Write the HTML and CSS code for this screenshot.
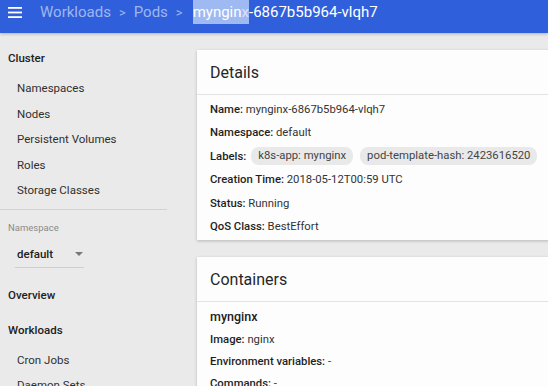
FILE: index.html
```html
<!DOCTYPE html>
<html lang="en">
<head>
    <meta charset="UTF-8">
    <meta name="viewport" content="width=device-width, initial-scale=1.0">
    <title>Pod - Kubernetes Dashboard</title>
    <link rel="stylesheet" href="styles.css">
</head>
<body>
    <!-- Top toolbar with breadcrumbs -->
    <header class="toolbar">
        <svg class="menu-icon" width="14" height="11" viewBox="0 0 14 11">
            <rect x="0" y="0" width="14" height="1.8" fill="#fff"/>
            <rect x="0" y="4.6" width="14" height="1.8" fill="#fff"/>
            <rect x="0" y="9.2" width="14" height="1.8" fill="#fff"/>
        </svg>
        <nav class="crumbs">
            <span class="crumb">Workloads</span>
            <span class="sep">&gt;</span>
            <span class="crumb">Pods</span>
            <span class="sep">&gt;</span>
            <span class="crumb current"><span class="selected">myngin</span><span class="selected caret">x</span>-6867b5b964-vlqh7</span>
        </nav>
    </header>

    <div class="layout">
        <!-- Side navigation -->
        <aside class="sidebar">
            <div class="nav-title cluster">Cluster</div>
            <a class="nav-item">Namespaces</a>
            <a class="nav-item">Nodes</a>
            <a class="nav-item">Persistent Volumes</a>
            <a class="nav-item">Roles</a>
            <a class="nav-item">Storage Classes</a>

            <hr class="nav-divider">

            <div class="ns-label">Namespace</div>
            <div class="ns-select">
                <span>default</span>
                <span class="arrow"></span>
            </div>

            <div class="nav-title overview">Overview</div>
            <div class="nav-title workloads">Workloads</div>
            <a class="nav-item">Cron Jobs</a>
            <a class="nav-item">Daemon Sets</a>
        </aside>

        <main class="content">
            <section class="card">
                <div class="card-header">Details</div>
                <div class="card-body details">
                    <div class="row"><b>Name:</b> mynginx-6867b5b964-vlqh7</div>
                    <div class="row"><b>Namespace:</b> default</div>
                    <div class="row labels">
                        <b>Labels:</b>
                        <span class="chip">k8s-app: mynginx</span>
                        <span class="chip">pod-template-hash: 2423616520</span>
                    </div>
                    <div class="row"><b>Creation Time:</b> 2018-05-12T00:59 UTC</div>
                    <div class="row"><b>Status:</b> Running</div>
                    <div class="row"><b>QoS Class:</b> BestEffort</div>
                </div>
            </section>

            <section class="card">
                <div class="card-header">Containers</div>
                <div class="card-body containers">
                    <div class="container-name">mynginx</div>
                    <div class="row"><b>Image:</b> nginx</div>
                    <div class="row"><b>Environment variables:</b> -</div>
                    <div class="row"><b>Commands:</b> -</div>
                </div>
            </section>
        </main>
    </div>
</body>
</html>
```

FILE: styles.css
```css
:root {
    --blue: #2f5fdb;
    --page-bg: #ebeaea;
    --text: #212121;
}

body {
    font-family: Roboto, "Liberation Sans", sans-serif;
    margin: 0;
    padding: 0;
    background-color: var(--page-bg);
    color: var(--text);
    overflow: hidden;
    height: 386px;
}

/* Toolbar */
.toolbar {
    background-color: var(--blue);
    height: 33px;
    display: flex;
    align-items: center;
    padding-left: 8px;
    box-shadow: 0 1px 3px rgba(0, 0, 0, 0.25);
    position: relative;
    z-index: 2;
}

.menu-icon {
    margin-right: 18px;
    margin-top: -9px;
}

.crumbs {
    display: flex;
    align-items: center;
    font-size: 15px;
    color: rgba(255, 255, 255, 0.55);
    margin-top: -9px;
    white-space: nowrap;
}

.sep {
    margin: 0 8px;
    font-size: 13px;
}

.sep + .crumb.current {
    margin-left: 2px;
}

.current {
    color: #ffffff;
}

.selected {
    background-color: #9fb9f2;
    padding: 3px 0;
}

.caret {
    color: #d8e2fa;
}

/* Layout */
.layout {
    display: flex;
}

.sidebar {
    width: 167px;
    flex-shrink: 0;
    padding-top: 15px;
    font-size: 11.5px;
}

.nav-title {
    font-weight: 500;
    padding-left: 8px;
    height: 20px;
    line-height: 20px;
}

.cluster {
    margin-bottom: 8px;
}

.nav-item {
    display: block;
    padding-left: 17px;
    height: 25.5px;
    line-height: 25.5px;
    color: #303030;
}

.nav-divider {
    border: none;
    border-top: 1px solid #d2d2d2;
    margin: 5px 0 0 0;
}

.ns-label {
    font-size: 9.5px;
    color: #8a8a8a;
    padding-left: 8px;
    margin-top: 12px;
}

.ns-select {
    margin: 14px 0 0 15px;
    width: 67px;
    display: flex;
    align-items: center;
    justify-content: space-between;
    font-weight: 500;
    padding: 0 0 6px 2px;
    border-bottom: 1px solid #cfcfcf;
}

.arrow {
    width: 0;
    height: 0;
    border-left: 4px solid transparent;
    border-right: 4px solid transparent;
    border-top: 4px solid #777;
    margin-right: 1px;
}

.overview {
    margin-top: 17px;
}

.workloads {
    margin-top: 15px;
    margin-bottom: 8px;
}

/* Main content */
.content {
    flex: 1;
    padding: 17px 0 0 30px;
    display: flex;
    flex-direction: column;
    gap: 17px;
}

.card {
    background-color: #fdfdfd;
    box-shadow: 0 1px 3px rgba(0, 0, 0, 0.22);
    margin-right: -20px;
}

.card-header {
    font-size: 16px;
    height: 44px;
    line-height: 46px;
    padding-left: 13px;
    border-bottom: 1px solid #e3e3e3;
    color: #262626;
}

.card-body {
    padding-left: 13px;
    font-size: 11.3px;
}

.details {
    padding-top: 2.5px;
    padding-bottom: 0.5px;
}

.details .row {
    height: 23.6px;
    line-height: 23.6px;
}

.containers {
    padding-top: 1px;
}

.containers .row {
    height: 22.3px;
    line-height: 22.3px;
}

.row {
    color: #333;
}

.row b {
    font-weight: 500;
    color: #1f1f1f;
}

.labels {
    display: flex;
    align-items: center;
    gap: 7px;
}

.chip {
    background-color: #e9e9e9;
    border-radius: 8px;
    height: 18px;
    line-height: 18px;
    padding: 0 7px;
    color: #444;
}

.labels b {
    margin-right: -2px;
}

.container-name {
    font-size: 12.5px;
    font-weight: 500;
    height: 26px;
    line-height: 28px;
}
```
